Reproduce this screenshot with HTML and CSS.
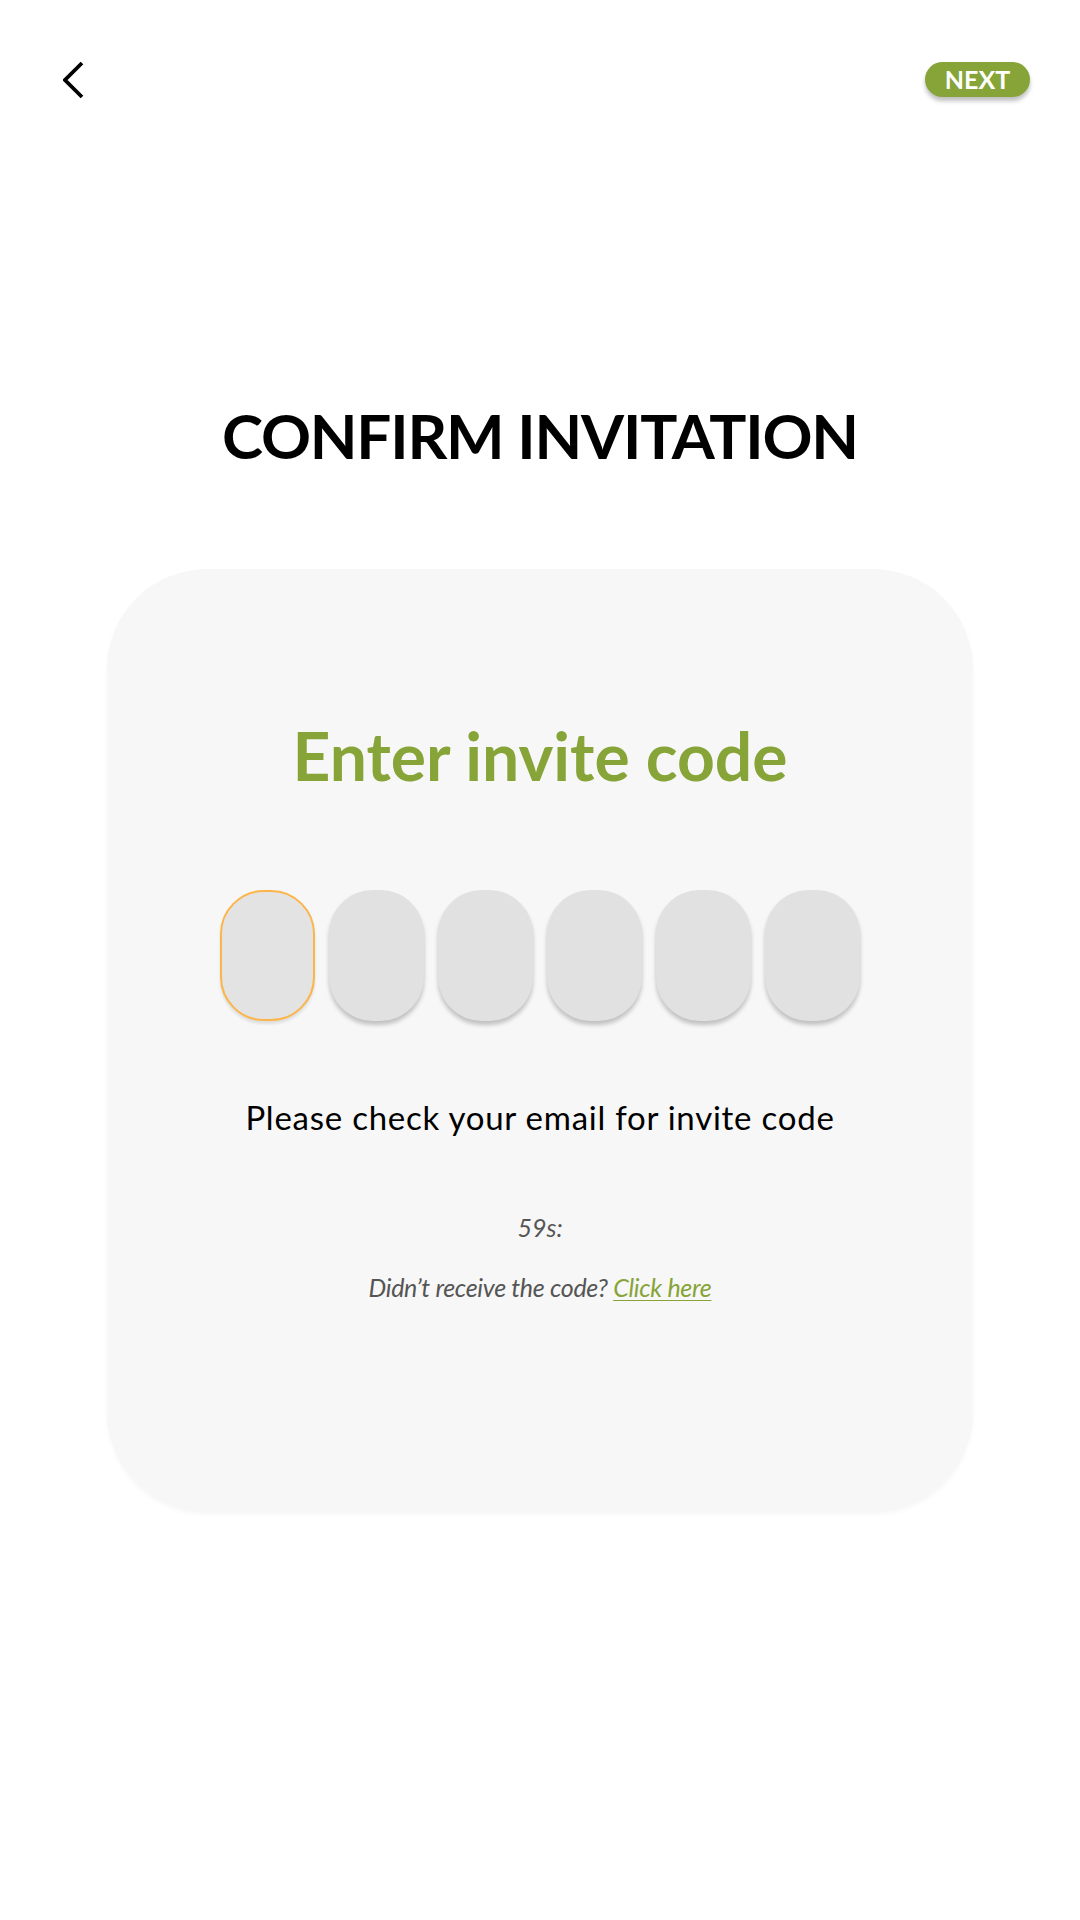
FILE: index.html
```html
<!DOCTYPE html>
<html lang="en">
<head>
<meta charset="utf-8">
<title>Confirm Invitation</title>
<link rel="stylesheet" href="styles.css">
</head>
<body>
<div class="screen">
  <header class="topbar">
    <button class="back" aria-label="Back">
      <svg width="22" height="38" viewBox="0 0 22 38"><polyline points="19,2 2,19 19,36" fill="none" stroke="#000" stroke-width="3.8" stroke-linecap="butt" stroke-linejoin="miter"/></svg>
    </button>
    <button class="next">NEXT</button>
  </header>

  <h1 class="title">CONFIRM INVITATION</h1>

  <section class="card">
    <h2 class="heading">Enter invite code</h2>
    <div class="code-row">
      <div class="code-box active"></div>
      <div class="code-box"></div>
      <div class="code-box"></div>
      <div class="code-box"></div>
      <div class="code-box"></div>
      <div class="code-box"></div>
    </div>
    <p class="hint">Please check your email for invite code</p>
    <p class="timer">59s:</p>
    <p class="resend">Didn’t receive the code? <a class="link" href="#">Click here</a></p>
  </section>
</div>
</body>
</html>
```

FILE: styles.css
```css
html, body {
  margin: 0;
  padding: 0;
  background: #ffffff;
}

body {
  font-family: Lato, "Open Sans", "Liberation Sans", sans-serif;
  color: #000;
}

.screen {
  width: 1080px;
  min-height: 1920px;
  display: flex;
  flex-direction: column;
  align-items: center;
}

.topbar {
  align-self: stretch;
  display: flex;
  justify-content: space-between;
  align-items: center;
  padding: 62px 50px 0 63px;
  height: 35px;
  box-sizing: content-box;
}

.back {
  border: 0;
  background: none;
  padding: 0;
  width: 22px;
  height: 38px;
  display: flex;
}

.next {
  border: 0;
  width: 105px;
  height: 35px;
  border-radius: 18px;
  background: #86a438;
  color: #fff;
  font-family: Lato, "Open Sans", sans-serif;
  font-weight: 700;
  font-size: 25px;
  line-height: 35px;
  padding: 0;
  box-shadow: 0 4px 4px rgba(0, 0, 0, 0.25);
}

.title {
  margin: 307px 0 0;
  font-size: 62px;
  line-height: 1;
  font-weight: 700;
  letter-spacing: -1.2px;
  text-align: center;
}

.card {
  margin-top: 103px;
  width: 866px;
  box-sizing: border-box;
  background: #f7f7f7;
  border-radius: 100px;
  padding: 154px 0 212px;
  display: flex;
  flex-direction: column;
  align-items: center;
  box-shadow: 0 3px 4px rgba(0, 0, 0, 0.03);
}

.heading {
  margin: 0;
  font-size: 66px;
  line-height: 1;
  font-weight: 700;
  color: #86a438;
}

.code-row {
  margin-top: 101px;
  display: flex;
  gap: 14px;
}

.code-box {
  width: 95px;
  height: 131px;
  box-sizing: border-box;
  border-radius: 44px;
  background: #e1e1e1;
  box-shadow: 0 4px 4px rgba(0, 0, 0, 0.22);
}

.code-box.active {
  border: 2px solid #fbb54a;
  background: #e3e3e3;
  box-shadow: 0 3px 3px rgba(0, 0, 0, 0.1);
}

.hint {
  margin: 80px 0 0;
  font-size: 33px;
  line-height: 1;
  font-weight: 400;
  letter-spacing: 0.75px;
}

.timer {
  margin: 81px 0 0;
  font-size: 25px;
  line-height: 1;
  font-style: italic;
  color: #555;
}

.resend {
  margin: 35px 0 0;
  font-size: 25px;
  line-height: 1;
  font-style: italic;
  color: #555;
  letter-spacing: -0.3px;
}

.link {
  color: #86a438;
  text-decoration: underline;
  text-underline-offset: 3px;
  text-decoration-thickness: 1px;
}
```
